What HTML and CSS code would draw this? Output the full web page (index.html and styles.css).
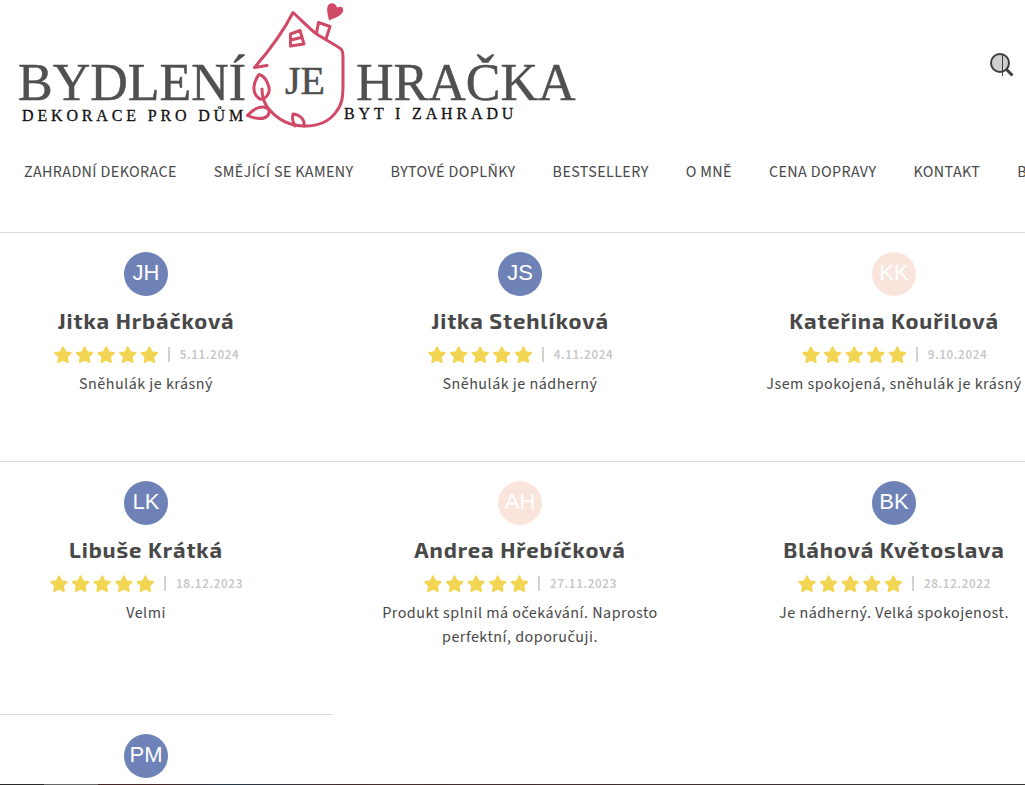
FILE: index.html
```html
<!DOCTYPE html>
<html lang="cs">
<head>
<meta charset="utf-8">
<title>Bydlení je hračka</title>
<link rel="stylesheet" href="styles.css">
</head>
<body>
<svg class="defs" aria-hidden="true">
  <symbol id="stars" viewBox="0 0 106 20">
    <g id="star-row">
      <path id="star" d="M10 2.300l2.300 4.900 5.400.700-3.900 3.700 1 5.400L10 14.400 5.200 17l1-5.400L2.300 7.900l5.400-.700z"/>
      <use href="#star" x="21.600"/>
      <use href="#star" x="43.200"/>
      <use href="#star" x="64.800"/>
      <use href="#star" x="86.400"/>
    </g>
  </symbol>
</svg>
<header class="header">
  <a class="logo" href="#" aria-label="Bydlení je hračka">
    <svg class="logo-art" viewBox="0 0 580 134">
      <g class="logo-title">
        <text x="18" y="100">BYDLENÍ</text>
        <text x="356" y="100">HRAČKA</text>
      </g>
      <text class="logo-je" x="285" y="94">JE</text>
      <g class="logo-sub">
        <text x="22" y="121">DEKORACE PRO DŮM</text>
        <text x="344" y="119">BYT I ZAHRADU</text>
      </g>
      <g class="logo-house">
        <path d="M267 65.500l-12.500 2C268 52 283 32 293 12.500c10 9 17 17 25 22.500 8 5 16 9 23 14 2 2 2 5 2 9v27c0 12-1 20-7 27-7 10-19 14-31 14-18 0-29-8-37-18-4-5-6-10-6-19"/>
        <path d="M316.500 33l2-10.500 11.500 4-4 12.500"/>
        <path d="M290.500 34l9.500-3.500 4 13.500-13.500 2zM291 40l10-2.500"/>
        <path d="M259 74.500c-6 8-7 18-1 23 1.500 2 4 2 6 1 6-4 6-10 4-14-2-6-5-9-9-10z"/>
        <path d="M247.500 115.500c7-8 16-11 21-6 2 5-2 9-8 9-5 0-9-1-13-3z"/>
        <path d="M295 126c-3-5-3-8-2-12 8 1 12 6 11 12"/>
      </g>
      <path class="logo-heart" d="M329 20.500c-1-6-3-11-1-15 3-4 8-2 9 2 4-2 7 0 6 4-2 5-8 6-14 9z"/>
    </svg>
  </a>
  <button class="search" type="button" aria-label="Hledat">
    <svg viewBox="0 0 26 26"><circle cx="11" cy="11" r="9"/><path class="search-line" d="M13.500 2v22"/><path class="search-handle" d="M17.500 17.500l6 6"/></svg>
  </button>
</header>
<nav class="nav">
  <a href="#">ZAHRADNÍ DEKORACE</a>
  <a href="#">SMĚJÍCÍ SE KAMENY</a>
  <a href="#">BYTOVÉ DOPLŇKY</a>
  <a href="#">BESTSELLERY</a>
  <a href="#">O MNĚ</a>
  <a href="#">CENA DOPRAVY</a>
  <a href="#">KONTAKT</a>
  <a href="#">BLOG</a>
</nav>
<main class="reviews-wrap">
  <div class="reviews">
    <article class="review">
      <div class="avatar">JH</div>
      <h2>Jitka Hrbáčková</h2>
      <div class="meta"><svg class="stars" role="img" aria-label="5 z 5"><use href="#stars"/></svg><time>5.11.2024</time></div>
      <p>Sněhulák je krásný</p>
    </article>
    <article class="review">
      <div class="avatar">JS</div>
      <h2>Jitka Stehlíková</h2>
      <div class="meta"><svg class="stars" role="img" aria-label="5 z 5"><use href="#stars"/></svg><time>4.11.2024</time></div>
      <p>Sněhulák je nádherný</p>
    </article>
    <article class="review">
      <div class="avatar avatar-light">KK</div>
      <h2>Kateřina Kouřilová</h2>
      <div class="meta"><svg class="stars" role="img" aria-label="5 z 5"><use href="#stars"/></svg><time>9.10.2024</time></div>
      <p>Jsem spokojená, sněhulák je krásný</p>
    </article>
    <article class="review">
      <div class="avatar">LK</div>
      <h2>Libuše Krátká</h2>
      <div class="meta"><svg class="stars" role="img" aria-label="5 z 5"><use href="#stars"/></svg><time>18.12.2023</time></div>
      <p>Velmi</p>
    </article>
    <article class="review">
      <div class="avatar avatar-light">AH</div>
      <h2>Andrea Hřebíčková</h2>
      <div class="meta"><svg class="stars" role="img" aria-label="5 z 5"><use href="#stars"/></svg><time>27.11.2023</time></div>
      <p>Produkt splnil má očekávání. Naprosto perfektní, doporučuji.</p>
    </article>
    <article class="review">
      <div class="avatar">BK</div>
      <h2>Bláhová Květoslava</h2>
      <div class="meta"><svg class="stars" role="img" aria-label="5 z 5"><use href="#stars"/></svg><time>28.12.2022</time></div>
      <p>Je nádherný. Velká spokojenost.</p>
    </article>
    <article class="review review-last">
      <div class="avatar">PM</div>
    </article>
  </div>
</main>
<footer class="bottom-bar"></footer>
</body>
</html>
```
FILE: styles.css
```css
* { box-sizing: border-box; }
body {
  margin: 0;
  min-height: 100vh;
  display: flex;
  flex-direction: column;
  overflow-x: hidden;
  background: #fff;
  color: #484848;
  font-family: "Source Sans Pro", "Source Sans 3", "Noto Sans CJK SC", "Noto Sans", sans-serif;
  font-size: 16px;
  line-height: 24px;
  letter-spacing: 0.5px;
}
.defs { position: absolute; width: 0; height: 0; }
.header {
  display: flex;
  justify-content: space-between;
  align-items: center;
  padding-right: 10px;
}
.logo { display: block; }
.logo-art { display: block; width: 580px; height: 134px; }
.logo-art text { font-family: "Palatino Linotype", Palatino, "Liberation Serif", serif; letter-spacing: 0; }
.logo-title { font-size: 52px; }
.logo-title, .logo-art .logo-je { fill: #505050; stroke: #505050; stroke-width: 0.5; }
.logo-art .logo-je { font-size: 40px; }
.logo-sub { font-size: 16px; fill: #111; stroke: #111; stroke-width: 0.3; }
.logo-art .logo-sub text { letter-spacing: 0.24em; }
.logo-house { fill: none; stroke: #d04a67; stroke-width: 3; stroke-linecap: round; stroke-linejoin: round; }
.logo-heart { fill: #d04a67; }
.search { border: 0; background: none; padding: 0; width: 26px; height: 26px; margin-bottom: 4px; }
.search svg { display: block; width: 26px; height: 26px; fill: #cfcfcf; stroke: #3e3e3e; stroke-width: 2; }
.search .search-line { stroke-width: 1; }
.search .search-handle { stroke-width: 3; }
.nav {
  display: flex;
  gap: 37px;
  padding: 26px 0 48px 24px;
  overflow: hidden;
  white-space: nowrap;
  letter-spacing: 0.025em;
}
.nav a { color: #484848; text-decoration: none; }
.reviews-wrap { flex: 1; overflow: hidden; }
.reviews {
  display: grid;
  grid-template-columns: repeat(3, 1fr);
  margin: 0 -56px 0 -41px;
}
.review {
  display: flex;
  flex-direction: column;
  align-items: center;
  padding: 19px 40px 65px;
  border-top: 1px solid #dcdcdc;
  text-align: center;
}
.review-last { padding-bottom: 6px; }
.avatar {
  width: 44px;
  height: 44px;
  border-radius: 50%;
  background: #6e82b7;
  color: #fff;
  font: 22px/42px "Liberation Sans", Arial, sans-serif;
  letter-spacing: 0;
}
.avatar-light { background: #fae5dd; }
.review h2 {
  margin: 8px 0 1px;
  font: bold 22px/32px "Exo 2", "Open Sans", sans-serif;
  letter-spacing: 0.04em;
}
.meta { display: flex; align-items: center; height: 35px; color: #c6c6c6; }
.stars { width: 106px; height: 20px; fill: #f3d554; stroke: #f3d554; stroke-width: 2; stroke-linejoin: round; }
.meta time { display: flex; align-items: center; font-size: 13px; font-weight: 600; letter-spacing: 0.05em; }
.meta time::before { content: ""; width: 2px; height: 15px; margin: 0 10px 0 9px; background: #d2d2d2; }
.review p { margin: 0; max-width: 290px; }
.bottom-bar { height: 1px; background: linear-gradient(90deg, #292929 0 44px, #666 44px 98px, #432726 98px 160px, #273746 230px, #432b2b 350px, #333); }
```
